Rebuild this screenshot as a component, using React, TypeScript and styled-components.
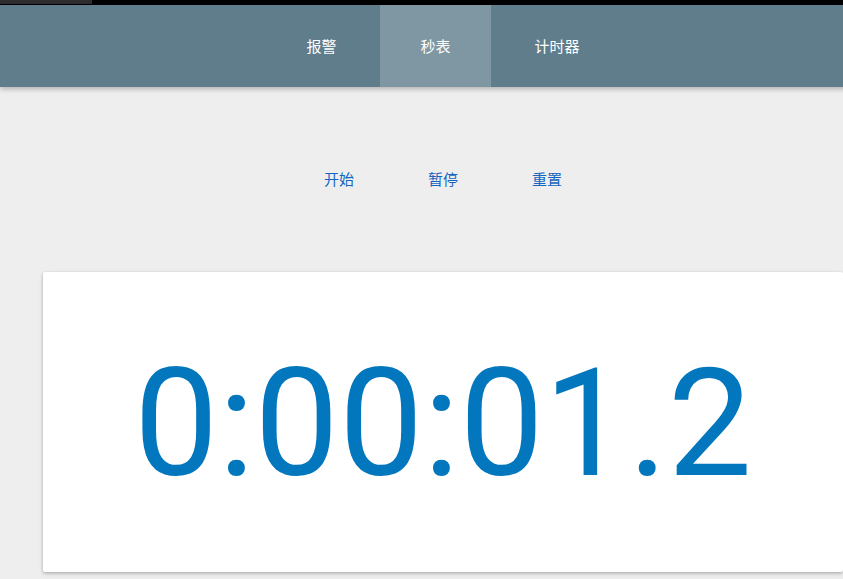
import React from 'react';
import styled, { createGlobalStyle } from 'styled-components';

const GlobalStyle = createGlobalStyle`
    html, body {
        margin: 0;
        padding: 0;
        overflow: hidden;
        background: #eeeeee;
        font-family: "Noto Sans CJK SC", "Noto Sans", sans-serif;
    }
`;

const Page = styled.div`
    width: 886px;
    min-height: 579px;
    background: #eeeeee;
`;

const TopStrip = styled.div`
    height: 5px;
    width: 843px;
    background: #000000;
    .tab-stub {
        width: 92px;
        height: 4px;
        background: #2e2e2e;
    }
`;

const NavBar = styled.nav`
    height: 82px;
    background: #607d8b;
    display: flex;
    justify-content: center;
    gap: 4px;
    box-shadow: 0 2px 5px rgba(0, 0, 0, 0.26);
    position: relative;
`;

const NavTab = styled.a<{ $active?: boolean }>`
    display: flex;
    align-items: center;
    padding: 0 40px 1px;
    color: #ffffff;
    font-size: 15px;
    font-weight: 400;
    text-decoration: none;
    background: ${(p) => (p.$active ? 'rgba(255, 255, 255, 0.2)' : 'transparent')};
    cursor: pointer;
`;

const Controls = styled.div`
    display: flex;
    justify-content: center;
    padding: 73px 0 76px;
`;

const FlatButton = styled.button`
    min-width: 88px;
    height: 36px;
    margin: 0 8px;
    padding: 0 6px;
    border: none;
    background: transparent;
    color: #1565c0;
    font-family: "Noto Sans CJK SC", "Noto Sans", sans-serif;
    font-size: 15px;
    cursor: pointer;
`;

const Card = styled.div`
    width: 800px;
    height: 300px;
    margin-left: 43px;
    background: #ffffff;
    border-radius: 2px;
    box-shadow: 0 1px 3px rgba(0, 0, 0, 0.2), 0 2px 5px rgba(0, 0, 0, 0.12);
    display: flex;
    align-items: center;
    justify-content: center;
`;

const Time = styled.div`
    font-family: Roboto, "Liberation Sans", sans-serif;
    font-size: 150px;
    font-weight: 400;
    line-height: 1;
    color: #0277bd;
    padding-top: 4px;
`;

const tabs = [
    { label: '报警' },
    { label: '秒表', active: true },
    { label: '计时器' },
];

const buttons = ['开始', '暂停', '重置'];

const App = () => {
    return (
        <Page>
            <GlobalStyle />
            <TopStrip>
                <div className="tab-stub" />
            </TopStrip>
            <NavBar>
                {tabs.map(({ label, active }) => (
                    <NavTab key={label} $active={active}>
                        {label}
                    </NavTab>
                ))}
            </NavBar>
            <Controls>
                {buttons.map((label) => (
                    <FlatButton key={label}>{label}</FlatButton>
                ))}
            </Controls>
            <Card>
                <Time>0:00:01.2</Time>
            </Card>
        </Page>
    );
};

export default App;
